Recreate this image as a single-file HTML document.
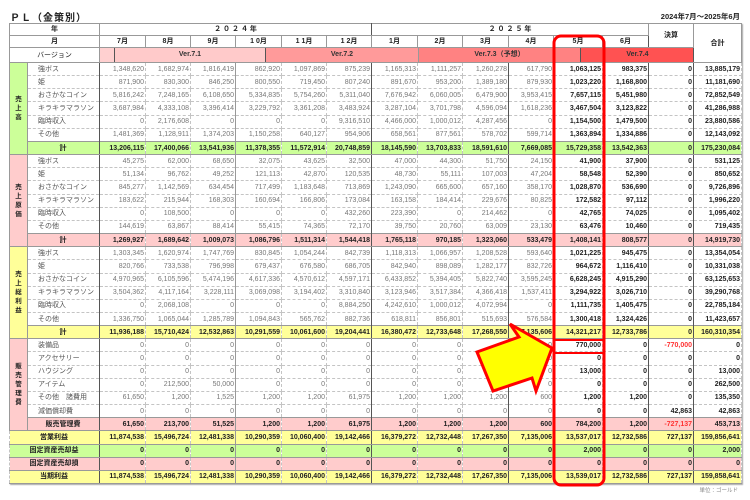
<!DOCTYPE html>
<html><head><meta charset="utf-8"><style>
*{margin:0;padding:0;box-sizing:border-box}
body{width:750px;height:500px;background:#fff;position:relative;overflow:hidden;font-family:"Liberation Sans","Noto Sans CJK JP",sans-serif;font-size:7px;color:#777}
.t{position:absolute;left:10px;top:9px;font-size:10px;font-weight:bold;color:#222;letter-spacing:1px}
.d{position:absolute;right:10px;top:11px;font-size:7.5px;font-weight:bold;color:#222}
.u{position:absolute;right:12px;top:486px;font-size:5.5px;color:#888}
table{position:absolute;left:9px;top:23px;border-collapse:collapse;table-layout:fixed;width:732px;box-shadow:1px 1px 1px #aaa}
td{border:1px dashed #c4c4c4;text-align:right;padding:0 1px 0 0;height:13.16px;line-height:11px;white-space:nowrap;overflow:hidden}
tr.h td{text-align:center;font-weight:bold;color:#222;border:1px solid #999;height:12px;padding:0}
tr.v td{height:15px}
td.c{text-align:center;font-weight:bold;color:#222;border:1px solid #999;padding:0;line-height:9px;font-size:6.5px}
td.i{text-align:left;padding-left:10px;border-left:1px solid #999;color:#555}
td.L{border-left:1.5px solid #555}
td.g{border-left:1px solid #999}
.k{font-weight:bold;color:#222}
tr.s td{font-weight:bold;color:#222;border-top:1px solid #999;border-bottom:1px solid #999}
tr.s td.n{text-align:center}
.G{background:#ccff99}.P{background:#ffcccc}.Y{background:#ffff99}
.r{color:#f33 !important}
.vb{position:relative;height:14px}
.vb div{position:absolute;top:0;height:14px;line-height:14px;text-align:center;font-weight:bold;color:#333}
</style></head><body>
<div class="t">ＰＬ（金策別）</div>
<div class="d">2024年7月～2025年6月</div>
<table>
<colgroup><col style="width:18px"><col style="width:72px"><col style="width:46px"><col style="width:45px"><col style="width:45px"><col style="width:46px"><col style="width:45px"><col style="width:45px"><col style="width:46px"><col style="width:45px"><col style="width:46px"><col style="width:45px"><col style="width:49px"><col style="width:46px"><col style="width:45px"><col style="width:48px"></colgroup>
<tr class="h"><td colspan="2">年</td><td colspan="6" style="border-right:1.5px solid #555">２ ０ ２ ４ 年</td><td colspan="6">２ ０ ２ ５ 年</td><td rowspan="2" style="border-left:1.5px solid #555">決算</td><td rowspan="3" style="border-left:1.5px solid #555">合計</td></tr>
<tr class="h"><td colspan="2">月</td><td>7月</td><td style="border-style:dashed solid">8月</td><td>9月</td><td>1 0月</td><td style="border-style:dashed solid">1 1月</td><td>1 2月</td><td style="border-left:1.5px solid #555">1月</td><td style="border-style:dashed solid">2月</td><td>3月</td><td>4月</td><td>5月</td><td>6月</td></tr>
<tr class="h v"><td colspan="2" style="font-weight:normal">バージョン</td><td colspan="13" style="padding:0"><div class="vb">
<div style="left:0;width:15px;background:#ffd0d0;border-right:1px solid #555"></div>
<div style="left:15px;width:151px;background:#ffcaca;border-right:1px solid #555">Ver.7.1</div>
<div style="left:166px;width:152px;background:#ff9a9a">Ver.7.2</div>
<div style="left:318px;width:162px;background:#ff8282;border-left:1px solid #999">Ver.7.3（予想）</div>
<div style="left:480px;width:114px;background:#ff5252;border-left:1px solid #555">Ver.7.4</div></div></td></tr>

<tr><td class="c G" rowspan="7">売<br>上<br>高</td><td class="i">強ボス</td><td class="L">1,348,620</td><td>1,682,974</td><td>1,816,419</td><td class="g">862,920</td><td>1,097,869</td><td>875,239</td><td class="L">1,165,313</td><td>1,111,257</td><td>1,260,278</td><td class="L">617,790</td><td class="k">1,063,125</td><td class="k">983,375</td><td class="L k">0</td><td class="L k">13,885,179</td></tr>
<tr><td class="i">姫</td><td class="L">871,900</td><td>830,300</td><td>846,250</td><td class="g">800,550</td><td>719,450</td><td>807,240</td><td class="L">891,670</td><td>953,200</td><td>1,389,180</td><td class="L">879,930</td><td class="k">1,023,220</td><td class="k">1,168,800</td><td class="L k">0</td><td class="L k">11,181,690</td></tr>
<tr><td class="i">おさかなコイン</td><td class="L">5,816,242</td><td>7,248,165</td><td>6,108,650</td><td class="g">5,334,835</td><td>5,754,260</td><td>5,311,040</td><td class="L">7,676,942</td><td>6,060,005</td><td>6,479,900</td><td class="L">3,953,415</td><td class="k">7,657,115</td><td class="k">5,451,980</td><td class="L k">0</td><td class="L k">72,852,549</td></tr>
<tr><td class="i">キラキラマラソン</td><td class="L">3,687,984</td><td>4,333,108</td><td>3,396,414</td><td class="g">3,229,792</td><td>3,361,208</td><td>3,483,924</td><td class="L">3,287,104</td><td>3,701,798</td><td>4,596,094</td><td class="L">1,618,236</td><td class="k">3,467,504</td><td class="k">3,123,822</td><td class="L k">0</td><td class="L k">41,286,988</td></tr>
<tr><td class="i">臨時収入</td><td class="L">0</td><td>2,176,608</td><td>0</td><td class="g">0</td><td>0</td><td>9,316,510</td><td class="L">4,466,000</td><td>1,000,012</td><td>4,287,456</td><td class="L">0</td><td class="k">1,154,500</td><td class="k">1,479,500</td><td class="L k">0</td><td class="L k">23,880,586</td></tr>
<tr><td class="i">その他</td><td class="L">1,481,369</td><td>1,128,911</td><td>1,374,203</td><td class="g">1,150,258</td><td>640,127</td><td>954,906</td><td class="L">658,561</td><td>877,561</td><td>578,702</td><td class="L">599,714</td><td class="k">1,363,894</td><td class="k">1,334,886</td><td class="L k">0</td><td class="L k">12,143,092</td></tr>
<tr class="s G"><td class="n">計</td><td class="L">13,206,115</td><td>17,400,066</td><td>13,541,936</td><td class="g">11,378,355</td><td>11,572,914</td><td>20,748,859</td><td class="L">18,145,590</td><td>13,703,833</td><td>18,591,610</td><td class="L">7,669,085</td><td>15,729,358</td><td>13,542,363</td><td class="L">0</td><td class="L">175,230,084</td></tr>

<tr><td class="c P" rowspan="7">売<br>上<br>原<br>価</td><td class="i">強ボス</td><td class="L">45,275</td><td>62,000</td><td>68,650</td><td class="g">32,075</td><td>43,625</td><td>32,500</td><td class="L">47,000</td><td>44,300</td><td>51,750</td><td class="L">24,150</td><td class="k">41,900</td><td class="k">37,900</td><td class="L k">0</td><td class="L k">531,125</td></tr>
<tr><td class="i">姫</td><td class="L">51,134</td><td>96,762</td><td>49,252</td><td class="g">121,113</td><td>42,870</td><td>120,535</td><td class="L">48,730</td><td>55,111</td><td>107,003</td><td class="L">47,204</td><td class="k">58,548</td><td class="k">52,390</td><td class="L k">0</td><td class="L k">850,652</td></tr>
<tr><td class="i">おさかなコイン</td><td class="L">845,277</td><td>1,142,569</td><td>634,454</td><td class="g">717,499</td><td>1,183,648</td><td>713,869</td><td class="L">1,243,090</td><td>665,600</td><td>657,160</td><td class="L">358,170</td><td class="k">1,028,870</td><td class="k">536,690</td><td class="L k">0</td><td class="L k">9,726,896</td></tr>
<tr><td class="i">キラキラマラソン</td><td class="L">183,622</td><td>215,944</td><td>168,303</td><td class="g">160,694</td><td>166,806</td><td>173,084</td><td class="L">163,158</td><td>184,414</td><td>229,676</td><td class="L">80,825</td><td class="k">172,582</td><td class="k">97,112</td><td class="L k">0</td><td class="L k">1,996,220</td></tr>
<tr><td class="i">臨時収入</td><td class="L">0</td><td>108,500</td><td>0</td><td class="g">0</td><td>0</td><td>432,260</td><td class="L">223,390</td><td>0</td><td>214,462</td><td class="L">0</td><td class="k">42,765</td><td class="k">74,025</td><td class="L k">0</td><td class="L k">1,095,402</td></tr>
<tr><td class="i">その他</td><td class="L">144,619</td><td>63,867</td><td>88,414</td><td class="g">55,415</td><td>74,365</td><td>72,170</td><td class="L">39,750</td><td>20,760</td><td>63,009</td><td class="L">23,130</td><td class="k">63,476</td><td class="k">10,460</td><td class="L k">0</td><td class="L k">719,435</td></tr>
<tr class="s P"><td class="n">計</td><td class="L">1,269,927</td><td>1,689,642</td><td>1,009,073</td><td class="g">1,086,796</td><td>1,511,314</td><td>1,544,418</td><td class="L">1,765,118</td><td>970,185</td><td>1,323,060</td><td class="L">533,479</td><td>1,408,141</td><td>808,577</td><td class="L">0</td><td class="L">14,919,730</td></tr>

<tr><td class="c Y" rowspan="7">売<br>上<br>総<br>利<br>益</td><td class="i">強ボス</td><td class="L">1,303,345</td><td>1,620,974</td><td>1,747,769</td><td class="g">830,845</td><td>1,054,244</td><td>842,739</td><td class="L">1,118,313</td><td>1,066,957</td><td>1,208,528</td><td class="L">593,640</td><td class="k">1,021,225</td><td class="k">945,475</td><td class="L k">0</td><td class="L k">13,354,054</td></tr>
<tr><td class="i">姫</td><td class="L">820,766</td><td>733,538</td><td>796,998</td><td class="g">679,437</td><td>676,580</td><td>686,705</td><td class="L">842,940</td><td>898,089</td><td>1,282,177</td><td class="L">832,726</td><td class="k">964,672</td><td class="k">1,116,410</td><td class="L k">0</td><td class="L k">10,331,038</td></tr>
<tr><td class="i">おさかなコイン</td><td class="L">4,970,965</td><td>6,105,596</td><td>5,474,196</td><td class="g">4,617,336</td><td>4,570,612</td><td>4,597,171</td><td class="L">6,433,852</td><td>5,394,405</td><td>5,822,740</td><td class="L">3,595,245</td><td class="k">6,628,245</td><td class="k">4,915,290</td><td class="L k">0</td><td class="L k">63,125,653</td></tr>
<tr><td class="i">キラキラマラソン</td><td class="L">3,504,362</td><td>4,117,164</td><td>3,228,111</td><td class="g">3,069,098</td><td>3,194,402</td><td>3,310,840</td><td class="L">3,123,946</td><td>3,517,384</td><td>4,366,418</td><td class="L">1,537,411</td><td class="k">3,294,922</td><td class="k">3,026,710</td><td class="L k">0</td><td class="L k">39,290,768</td></tr>
<tr><td class="i">臨時収入</td><td class="L">0</td><td>2,068,108</td><td>0</td><td class="g">0</td><td>0</td><td>8,884,250</td><td class="L">4,242,610</td><td>1,000,012</td><td>4,072,994</td><td class="L">0</td><td class="k">1,111,735</td><td class="k">1,405,475</td><td class="L k">0</td><td class="L k">22,785,184</td></tr>
<tr><td class="i">その他</td><td class="L">1,336,750</td><td>1,065,044</td><td>1,285,789</td><td class="g">1,094,843</td><td>565,762</td><td>882,736</td><td class="L">618,811</td><td>856,801</td><td>515,693</td><td class="L">576,584</td><td class="k">1,300,418</td><td class="k">1,324,426</td><td class="L k">0</td><td class="L k">11,423,657</td></tr>
<tr class="s Y"><td class="n">計</td><td class="L">11,936,188</td><td>15,710,424</td><td>12,532,863</td><td class="g">10,291,559</td><td>10,061,600</td><td>19,204,441</td><td class="L">16,380,472</td><td>12,733,648</td><td>17,268,550</td><td class="L">7,135,606</td><td>14,321,217</td><td>12,733,786</td><td class="L">0</td><td class="L">160,310,354</td></tr>

<tr><td class="c P" rowspan="7">販<br>売<br>管<br>理<br>費</td><td class="i">装備品</td><td class="L">0</td><td>0</td><td>0</td><td class="g">0</td><td>0</td><td>0</td><td class="L">0</td><td>0</td><td>0</td><td class="L">0</td><td class="k">770,000</td><td class="k">0</td><td class="L k r">-770,000</td><td class="L k">0</td></tr>
<tr><td class="i">アクセサリー</td><td class="L">0</td><td>0</td><td>0</td><td class="g">0</td><td>0</td><td>0</td><td class="L">0</td><td>0</td><td>0</td><td class="L">0</td><td class="k">0</td><td class="k">0</td><td class="L k">0</td><td class="L k">0</td></tr>
<tr><td class="i">ハウジング</td><td class="L">0</td><td>0</td><td>0</td><td class="g">0</td><td>0</td><td>0</td><td class="L">0</td><td>0</td><td>0</td><td class="L">0</td><td class="k">13,000</td><td class="k">0</td><td class="L k">0</td><td class="L k">13,000</td></tr>
<tr><td class="i">アイテム</td><td class="L">0</td><td>212,500</td><td>50,000</td><td class="g">0</td><td>0</td><td>0</td><td class="L">0</td><td>0</td><td>0</td><td class="L">0</td><td class="k">0</td><td class="k">0</td><td class="L k">0</td><td class="L k">262,500</td></tr>
<tr><td class="i">その他　諸費用</td><td class="L">61,650</td><td>1,200</td><td>1,525</td><td class="g">1,200</td><td>1,200</td><td>61,975</td><td class="L">1,200</td><td>1,200</td><td>1,200</td><td class="L">600</td><td class="k">1,200</td><td class="k">1,200</td><td class="L k">0</td><td class="L k">135,350</td></tr>
<tr><td class="i">減価償却費</td><td class="L">0</td><td>0</td><td>0</td><td class="g">0</td><td>0</td><td>0</td><td class="L">0</td><td>0</td><td>0</td><td class="L">0</td><td class="k">0</td><td class="k">0</td><td class="L k">42,863</td><td class="L k">42,863</td></tr>
<tr class="s P"><td class="n">販売管理費</td><td class="L">61,650</td><td>213,700</td><td>51,525</td><td class="g">1,200</td><td>1,200</td><td>61,975</td><td class="L">1,200</td><td>1,200</td><td>1,200</td><td class="L">600</td><td>784,200</td><td>1,200</td><td class="L r">-727,137</td><td class="L">453,713</td></tr>

<tr class="s Y"><td class="n" colspan="2">営業利益</td><td class="L">11,874,538</td><td>15,496,724</td><td>12,481,338</td><td class="g">10,290,359</td><td>10,060,400</td><td>19,142,466</td><td class="L">16,379,272</td><td>12,732,448</td><td>17,267,350</td><td class="L">7,135,006</td><td>13,537,017</td><td>12,732,586</td><td class="L">727,137</td><td class="L">159,856,641</td></tr>
<tr class="s G"><td class="n" colspan="2">固定資産売却益</td><td class="L">0</td><td>0</td><td>0</td><td class="g">0</td><td>0</td><td>0</td><td class="L">0</td><td>0</td><td>0</td><td class="L">0</td><td>2,000</td><td>0</td><td class="L">0</td><td class="L">2,000</td></tr>
<tr class="s P"><td class="n" colspan="2">固定資産売却損</td><td class="L">0</td><td>0</td><td>0</td><td class="g">0</td><td>0</td><td>0</td><td class="L">0</td><td>0</td><td>0</td><td class="L">0</td><td>0</td><td>0</td><td class="L">0</td><td class="L">0</td></tr>
<tr class="s Y"><td class="n" colspan="2">当期利益</td><td class="L">11,874,538</td><td>15,496,724</td><td>12,481,338</td><td class="g">10,290,359</td><td>10,060,400</td><td>19,142,466</td><td class="L">16,379,272</td><td>12,732,448</td><td>17,267,350</td><td class="L">7,135,006</td><td>13,539,017</td><td>12,732,586</td><td class="L">727,137</td><td class="L">159,858,641</td></tr>
</table>
<div class="u">単位：ゴールド</div>
<svg width="750" height="500" style="position:absolute;left:0;top:0">
<rect x="554" y="36" width="50" height="449" rx="7" fill="none" stroke="#f00" stroke-width="3"/>
<rect x="554" y="340" width="50" height="13" fill="none" stroke="#f00" stroke-width="2"/>
<polygon points="510,324 552,348 536,391 532,378 493,391 477,352 519,337" fill="#ffff00" stroke="#f00" stroke-width="3" stroke-linejoin="miter"/>
</svg>
</body></html>
